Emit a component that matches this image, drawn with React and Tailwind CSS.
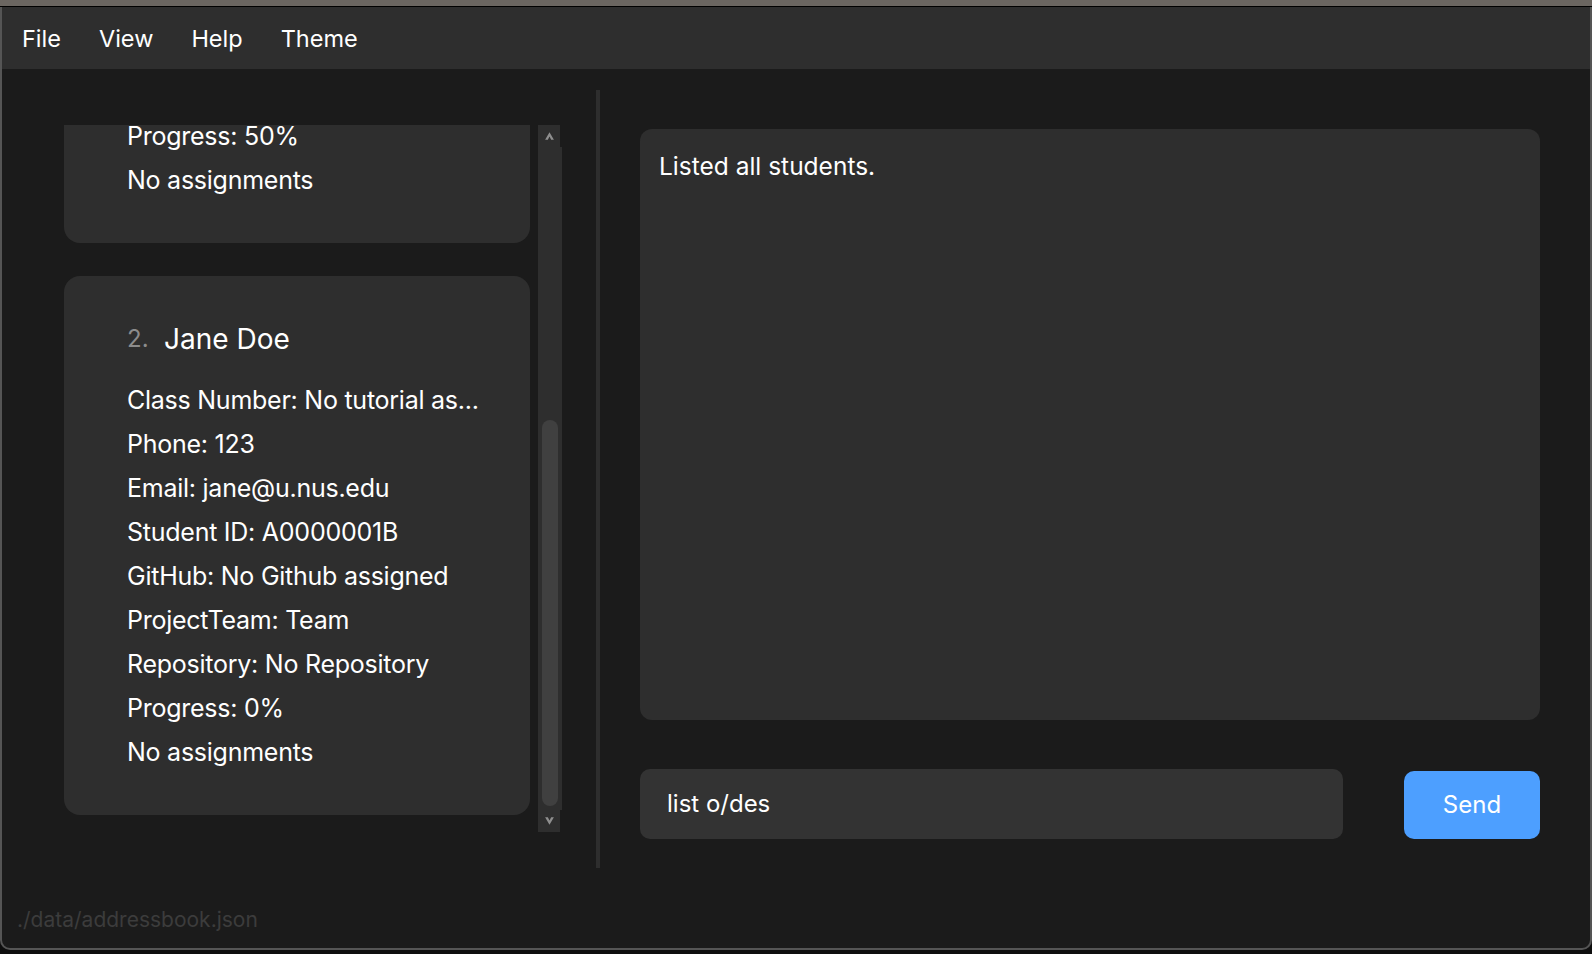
import React from 'react';

const font = { fontFamily: 'Inter, "Noto Sans", sans-serif' };

const menus = ['File', 'View', 'Help', 'Theme'];

const students = [
  {
    index: 1,
    name: 'Alex Yeoh',
    rows: [
      'Class Number: T01',
      'Phone: 87438807',
      'Email: alexyeoh@example.com',
      'Student ID: A0000000A',
      'GitHub: alexyeoh',
      'ProjectTeam: Team',
      'Repository: No Repository',
      'Progress: 50%',
      'No assignments',
    ],
  },
  {
    index: 2,
    name: 'Jane Doe',
    rows: [
      'Class Number: No tutorial as...',
      'Phone: 123',
      'Email: jane@u.nus.edu',
      'Student ID: A0000001B',
      'GitHub: No Github assigned',
      'ProjectTeam: Team',
      'Repository: No Repository',
      'Progress: 0%',
      'No assignments',
    ],
  },
];

const StudentCard = ({ student, className = '' }) => (
  <div className={`w-[466px] shrink-0 rounded-[16px] bg-[#2e2e2e] pl-[63px] pr-[10px] pt-[41px] pb-[41px] ${className}`}>
    <div className="mb-[17px] flex h-[44px] items-center">
      <span className="w-[37px] text-[24px] text-[#8c8c8c]">{student.index}.</span>
      <span className="text-[28px] text-white">{student.name}</span>
    </div>
    {student.rows.map((row) => (
      <div key={row} className="h-[44px] whitespace-nowrap text-[25px] leading-[44px] tracking-[-0.25px] text-white">
        {row}
      </div>
    ))}
  </div>
);

const ScrollBar = () => (
  <div className="ml-[8px] flex h-[707px] w-[24px] flex-col">
    <div className="flex h-[22px] w-[22px] items-center justify-center bg-[#2e2e2e]">
      <svg width="11" height="10" viewBox="0 0 10 9">
        <path d="M5 1 L9 8 L6.5 8 L5 5 L3.5 8 L1 8 Z" fill="#8f8f8f" />
      </svg>
    </div>
    <div className="flex flex-1 flex-col bg-[#2e2e2e] px-[4px] pt-[273px] pb-[4px]">
      <div className="flex-1 rounded-full bg-[#404040]" />
    </div>
    <div className="flex h-[22px] w-[22px] items-center justify-center bg-[#2e2e2e]">
      <svg width="11" height="10" viewBox="0 0 10 9">
        <path d="M5 8 L9 1 L6.5 1 L5 4 L3.5 1 L1 1 Z" fill="#8f8f8f" />
      </svg>
    </div>
  </div>
);

export default function App() {
  return (
    <div className="flex h-[954px] w-[1592px] flex-col bg-[#0e0e0e]" style={font}>
      <div className="h-[6px] bg-[#6b6661]" />
      <div className="h-[1px] bg-black" />
      <div className="flex h-[943px] flex-col overflow-hidden rounded-b-[10px] border-x-2 border-b-2 border-[#555555] bg-[#1b1b1b]">
        {/* menu bar */}
        <div className="flex h-[62px] shrink-0 items-center gap-[38px] bg-[#2e2e2e] pl-[20px] pt-[2px] text-[23.5px] leading-[30px] text-white">
          {menus.map((m) => (
            <span key={m}>{m}</span>
          ))}
        </div>

        {/* main */}
        <div className="flex h-[811px] shrink-0 items-start">
          <div className="ml-[62px] mt-[56px] flex">
            <div className="h-[707px] w-[466px] overflow-hidden">
              <div className="flex flex-col gap-[33px]">
                <StudentCard student={students[0]} className="mt-[-421px]" />
                <StudentCard student={students[1]} />
              </div>
            </div>
            <ScrollBar />
          </div>

          <div className="ml-[34px] mt-[21px] h-[778px] w-[4px] bg-[#2e2e2e]" />

          <div className="ml-[40px] mt-[60px] flex w-[900px] flex-col">
            <div className="h-[591px] rounded-[12px] bg-[#2e2e2e] pl-[19px] pt-[22px] text-[24.5px] leading-[30px] text-white">
              Listed all students.
            </div>
            <div className="mt-[49px] flex items-center justify-between">
              <div className="flex h-[70px] w-[703px] items-center rounded-[10px] bg-[#333333] pl-[27px] text-[24px] text-white">
                list o/des
              </div>
              <button className="mt-[2px] h-[68px] w-[136px] rounded-[10px] bg-[#4d9fff] text-[24px] text-white">
                Send
              </button>
            </div>
          </div>
        </div>

        {/* status bar */}
        <div className="pl-[15px] pt-[25px] text-[21px] leading-[30px] text-[#3c3c3c]">
          ./data/addressbook.json
        </div>
      </div>
    </div>
  );
}
